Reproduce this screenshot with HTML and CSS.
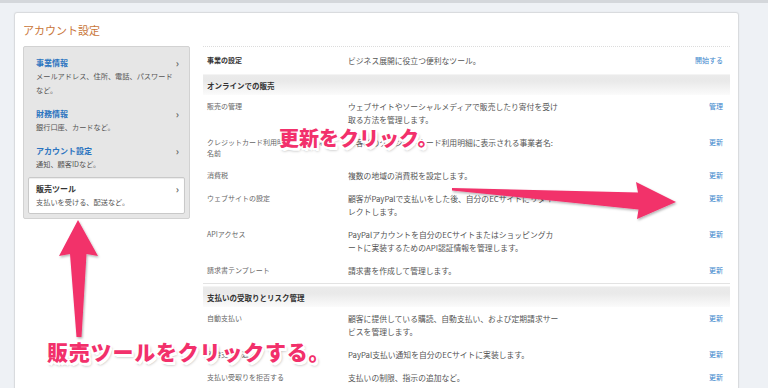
FILE: index.html
```html
<!DOCTYPE html>
<html lang="ja">
<head>
    <meta charset="UTF-8">
    <title>アカウント設定</title>
    <link rel="stylesheet" href="styles.css">
</head>
<body>
    <div class="topbar"></div>

    <div class="panel">
        <h1 class="title">アカウント設定</h1>

        <div class="content">
            <!-- sidebar menu -->
            <ul class="side">
                <li class="side-item">
                    <div class="side-head"><span class="side-link">事業情報</span><span class="chev">›</span></div>
                    <p class="side-desc">メールアドレス、住所、電話、パスワードなど。</p>
                </li>
                <li class="side-item">
                    <div class="side-head"><span class="side-link">財務情報</span><span class="chev">›</span></div>
                    <p class="side-desc">銀行口座、カードなど。</p>
                </li>
                <li class="side-item">
                    <div class="side-head"><span class="side-link">アカウント設定</span><span class="chev">›</span></div>
                    <p class="side-desc">通知、顧客IDなど。</p>
                </li>
                <li class="side-item active">
                    <div class="side-head"><span class="side-link">販売ツール</span><span class="chev">›</span></div>
                    <p class="side-desc">支払いを受ける、配送など。</p>
                </li>
            </ul>

            <!-- settings table -->
            <div class="tbl">
                <div class="row first">
                    <div class="label strong">事業の設定</div>
                    <div class="desc">ビジネス展開に役立つ便利なツール。</div>
                    <a class="link">開始する</a>
                </div>

                <div class="sec-head">オンラインでの販売</div>
                <div class="row two">
                    <div class="label">販売の管理</div>
                    <div class="desc">ウェブサイトやソーシャルメディアで販売したり寄付を受け<br>取る方法を管理します。</div>
                    <a class="link">管理</a>
                </div>
                <div class="row two">
                    <div class="label">クレジットカード利用明細に表示される名前</div>
                    <div class="desc">お客様のクレジットカード利用明細に表示される事業者名:</div>
                    <a class="link">更新</a>
                </div>
                <div class="row">
                    <div class="label">消費税</div>
                    <div class="desc">複数の地域の消費税を設定します。</div>
                    <a class="link">更新</a>
                </div>
                <div class="row two">
                    <div class="label">ウェブサイトの設定</div>
                    <div class="desc">顧客がPayPalで支払いをした後、自分のECサイトにリダイ<br>レクトします。</div>
                    <a class="link">更新</a>
                </div>
                <div class="row two">
                    <div class="label">APIアクセス</div>
                    <div class="desc">PayPalアカウントを自分のECサイトまたはショッピングカ<br>ートに実装するためのAPI認証情報を管理します。</div>
                    <a class="link">更新</a>
                </div>
                <div class="row">
                    <div class="label">請求書テンプレート</div>
                    <div class="desc">請求書を作成して管理します。</div>
                    <a class="link">更新</a>
                </div>

                <hr class="divider">

                <div class="sec-head">支払いの受取りとリスク管理</div>
                <div class="row two">
                    <div class="label">自動支払い</div>
                    <div class="desc">顧客に提供している購読、自動支払い、および定期請求サー<br>ビスを管理します。</div>
                    <a class="link">更新</a>
                </div>
                <div class="row">
                    <div class="label">即時支払い通知</div>
                    <div class="desc">PayPal支払い通知を自分のECサイトに実装します。</div>
                    <a class="link">更新</a>
                </div>
                <div class="row">
                    <div class="label">支払い受取りを拒否する</div>
                    <div class="desc">支払いの制限、指示の追加など。</div>
                    <a class="link">更新</a>
                </div>
            </div>
        </div>
    </div>

    <!-- annotations drawn over the screenshot -->
    <svg class="arrows" width="768" height="388" viewBox="0 0 768 388">
        <defs>
            <filter id="shadow" x="-20%" y="-20%" width="140%" height="140%">
                <feDropShadow dx="1" dy="1.5" stdDeviation="1.2" flood-color="#000" flood-opacity="0.3"/>
            </filter>
        </defs>
        <g fill="#f2306b" filter="url(#shadow)">
            <polygon points="78,220 98,256 86.5,254 81.5,337 76.5,337 70,254 59,256"/>
            <polygon points="452,188 638,192.5 636,182 676,202 637,219 638.5,209.5 452,190.5"/>
        </g>
    </svg>

    <p class="note note-update">更新をクリック。</p>
    <p class="note note-tools">販売ツールをクリックする。</p>
</body>
</html>
```

FILE: styles.css
```css
body {
    margin: 0;
    background-color: #eef1f5;
    font-family: "Noto Sans CJK JP", "Liberation Sans", sans-serif;
    color: #555;
    position: relative;
    height: 388px;
    overflow: hidden;
}
.topbar {
    height: 3px;
    background: #d4d7db;
}
.panel {
    margin: 9px 0 0 14px;
    width: 708px;
    height: 400px;
    padding: 9px 7px 0 8px;
    background: #fff;
    border: 1px solid #d9dbde;
    border-radius: 3px;
    box-shadow: 0 0 2px rgba(0, 0, 0, 0.06);
}
.title {
    margin: 0 0 8px;
    font-size: 11px;
    line-height: 16px;
    font-weight: normal;
    color: #c9763a;
}
.content {
    display: flex;
    align-items: flex-start;
    gap: 13px;
}

/* sidebar */
.side {
    list-style: none;
    margin: 0;
    padding: 4px;
    width: 157px;
    background: #e6e6e6;
    border: 1px solid #d2d2d2;
    border-radius: 2px;
}
.side-item {
    padding: 5px 8px;
}
.side-item.active {
    margin-top: 1px;
    padding: 4px 7px;
    background: #fff;
    border: 1px solid #c9c9c9;
    border-radius: 2px;
    box-shadow: inset 0 1px 1px rgba(0, 0, 0, 0.08);
}
.side-head {
    display: flex;
    justify-content: space-between;
    align-items: center;
    height: 12px;
    margin-bottom: 1px;
}
.side-link {
    font-size: 8px;
    font-weight: bold;
    color: #2b74c0;
}
.active .side-link {
    color: #333;
}
.chev {
    font-size: 10px;
    font-weight: bold;
    color: #666;
    margin-right: -2px;
}
.side-desc {
    margin: 0;
    font-size: 7.2px;
    line-height: 14px;
    color: #555;
}

/* settings table */
.tbl {
    width: 527px;
    border-top: 1px dotted #dcdcdc;
}
.row {
    display: grid;
    grid-template-columns: 141px 240px 1fr;
    align-items: start;
    padding: 5px 7px 5px 4px;
    line-height: 13px;
}
.row.first {
    padding-top: 7px;
    padding-bottom: 7px;
}
.label {
    padding-top: 1px;
    padding-right: 12px;
    font-size: 7px;
    line-height: 11px;
    color: #666;
}
.label.strong {
    font-weight: bold;
    color: #333;
}
.desc {
    font-size: 7.8px;
    color: #555;
}
.link {
    justify-self: end;
    font-size: 7px;
    color: #3a86cc;
}
.sec-head {
    height: 13px;
    padding: 4px 4px 3px;
    font-size: 7.5px;
    line-height: 13px;
    font-weight: bold;
    color: #333;
    background: linear-gradient(to bottom, #ebebeb, #e9e9e9 30%, #fbfbfb);
    border-top: 1px solid #f4f4f4;
}
.divider {
    margin: 1px 0 2px;
    border: 0;
    border-top: 1px solid #e3e3e3;
}

/* annotations */
.arrows {
    position: absolute;
    left: 0;
    top: 0;
}
.note {
    position: absolute;
    margin: 0;
    font-weight: 900;
    color: #f2306b;
    white-space: nowrap;
    text-shadow:
        1.5px 0 0 #fff, -1.5px 0 0 #fff, 0 1.5px 0 #fff, 0 -1.5px 0 #fff,
        1.5px 1.5px 0 #fff, -1.5px -1.5px 0 #fff, 1.5px -1.5px 0 #fff, -1.5px 1.5px 0 #fff,
        2px 2.5px 0 #fff, 2px 3px 3px rgba(0, 0, 0, 0.35);
}
.note-update {
    left: 279px;
    top: 127px;
    font-size: 20px;
    line-height: 22px;
}
.note-tools {
    left: 47px;
    top: 340px;
    font-size: 21px;
    line-height: 23px;
    letter-spacing: 0.8px;
}
```
